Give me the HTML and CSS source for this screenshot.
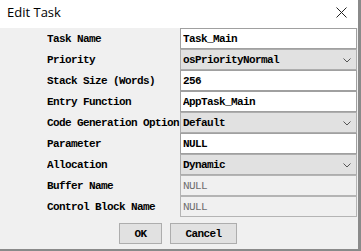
FILE: index.html
```html
<!DOCTYPE html>
<html>

<head>
    <meta charset='utf-8'>
    <title>Edit Task</title>
    <meta name='viewport' content='width=device-width, initial-scale=1'>

    <link rel="stylesheet" href="styles.css">
</head>

<body>
    <div class="dialog">
        <div class="title-bar">
            <span class="title">Edit Task</span>
            <svg class="close" width="11" height="11" viewBox="0 0 11 11">
                <path d="M0.5 0.5 L10.5 10.5 M10.5 0.5 L0.5 10.5" stroke="#222" stroke-width="1" fill="none" />
            </svg>
        </div>

        <form class="form-container">
            <label for="taskName">Task Name</label>
            <input id="taskName" class="field" type="text" value="Task_Main" />

            <label for="priority">Priority</label>
            <div class="select-wrap">
                <select id="priority" class="field select">
                    <option>osPriorityNormal</option>
                </select>
                <svg class="chevron" width="8" height="5" viewBox="0 0 8 5"><path d="M0.5 0.5 L4 4 L7.5 0.5" stroke="#555" fill="none" /></svg>
            </div>

            <label for="stackSize">Stack Size (Words)</label>
            <input id="stackSize" class="field" type="text" value="256" />

            <label for="entryFunction">Entry Function</label>
            <input id="entryFunction" class="field" type="text" value="AppTask_Main" />

            <label for="codeGen">Code Generation Option</label>
            <div class="select-wrap">
                <select id="codeGen" class="field select">
                    <option>Default</option>
                </select>
                <svg class="chevron" width="8" height="5" viewBox="0 0 8 5"><path d="M0.5 0.5 L4 4 L7.5 0.5" stroke="#555" fill="none" /></svg>
            </div>

            <label for="parameter">Parameter</label>
            <input id="parameter" class="field" type="text" value="NULL" />

            <label for="allocation">Allocation</label>
            <div class="select-wrap">
                <select id="allocation" class="field select">
                    <option>Dynamic</option>
                </select>
                <svg class="chevron" width="8" height="5" viewBox="0 0 8 5"><path d="M0.5 0.5 L4 4 L7.5 0.5" stroke="#555" fill="none" /></svg>
            </div>

            <label for="bufferName">Buffer Name</label>
            <input id="bufferName" class="field" type="text" value="NULL" disabled />

            <label for="cbName">Control Block Name</label>
            <input id="cbName" class="field" type="text" value="NULL" disabled />
        </form>

        <div class="buttons">
            <button class="btn btn-ok">OK</button>
            <button class="btn btn-cancel">Cancel</button>
        </div>
    </div>
</body>

</html>
```

FILE: styles.css
```css
html, body {
    margin: 0;
    padding: 0;
}

body {
    width: 361px;
    height: 251px;
    overflow: hidden;
    background-color: #f0f0f0;
}

.dialog {
    box-sizing: border-box;
    width: 361px;
    height: 251px;
    border-right: 3px solid #8a8a8a;
    border-bottom: 2px solid #8a8a8a;
    font-family: "Liberation Mono", monospace;
    font-size: 11px;
    letter-spacing: -0.6px;
    color: #000;
}

.title-bar {
    height: 28px;
    background-color: white;
    display: flex;
    align-items: center;
    justify-content: space-between;
    padding: 0 11px 0 7px;
}

.title {
    font-family: "Open Sans", sans-serif;
    font-size: 13px;
    letter-spacing: 0;
    color: #000;
    margin-top: -4px;
}

.close {
    margin-top: -4px;
}

.form-container {
    display: grid;
    grid-template-columns: 133px 177px;
    grid-auto-rows: 21px;
    padding: 0 0 0 47px;
    margin: 0;
}

.form-container label {
    display: flex;
    align-items: center;
    white-space: nowrap;
    overflow: hidden;
    font-weight: bold;
}

.field {
    box-sizing: border-box;
    width: 177px;
    height: 21px;
    margin: 0;
    padding: 0 0 0 2px;
    border: 1px solid #a0a0a0;
    border-radius: 0;
    background-color: white;
    font-family: "Liberation Mono", monospace;
    font-size: 11px;
    letter-spacing: -0.6px;
    font-weight: bold;
    color: #000;
    outline: none;
}

.field:disabled {
    background-color: #f0f0f0;
    border-color: #b4b4b4;
    color: #6d6d6d;
    font-weight: normal;
}

.select-wrap {
    position: relative;
    height: 21px;
}

.select {
    appearance: none;
    -webkit-appearance: none;
    background-color: #e1e1e1;
    border-color: #adadad;
}

.chevron {
    position: absolute;
    right: 6px;
    top: 9px;
    pointer-events: none;
}

.buttons {
    display: flex;
    justify-content: center;
    gap: 8px;
    margin-top: 6px;
    padding-right: 2px;
}

.btn {
    box-sizing: border-box;
    height: 21px;
    margin: 0;
    padding: 0;
    border: 1px solid #adadad;
    background-color: #e1e1e1;
    font-family: "Liberation Mono", monospace;
    font-size: 11px;
    letter-spacing: -0.6px;
    font-weight: bold;
    color: #000;
}

.btn-ok {
    width: 43px;
}

.btn-cancel {
    width: 67px;
}
```
